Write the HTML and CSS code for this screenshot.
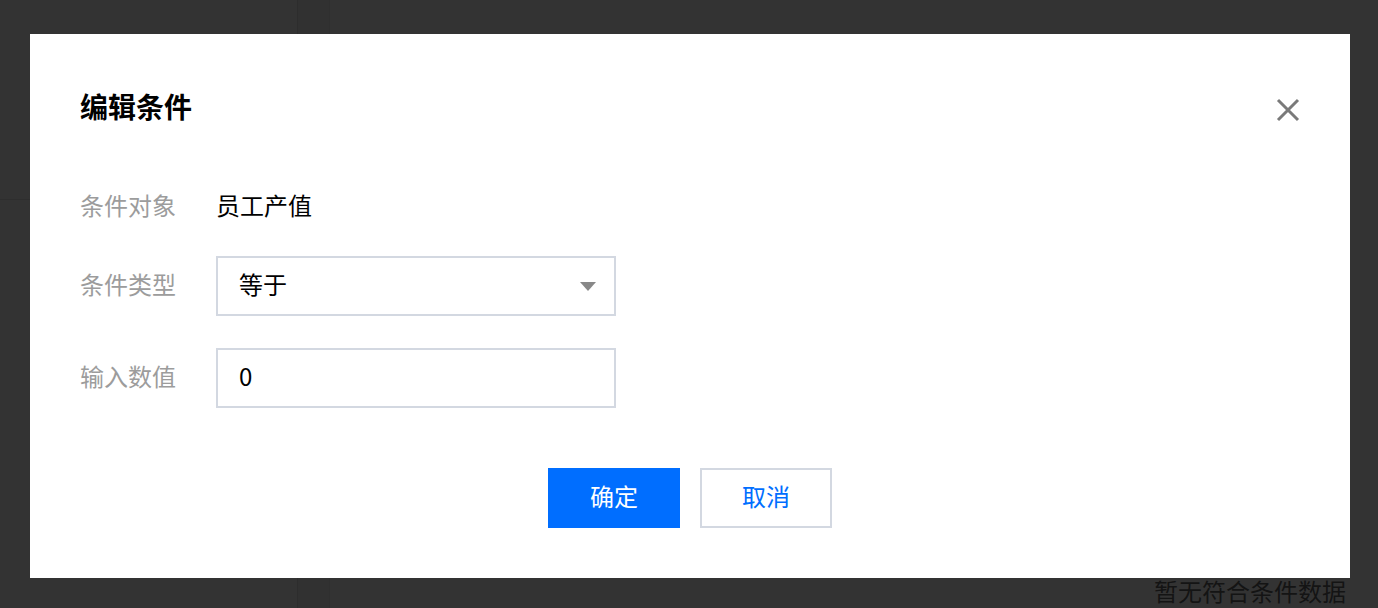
FILE: index.html
```html
<!DOCTYPE html>
<html lang="zh-CN">
<head>
<meta charset="utf-8">
<title>编辑条件</title>
<link rel="stylesheet" href="styles.css">
</head>
<body>
<div class="page">
  <aside class="sidebar">
    <div class="sidebar-top"></div>
    <div class="sidebar-rest"></div>
  </aside>
  <div class="strip"></div>
  <main class="main">
    <div class="empty">暂无符合条件数据</div>
  </main>
</div>

<div class="overlay">
  <div class="modal">
    <button class="close" aria-label="关闭">
      <svg width="24" height="24" viewBox="0 0 24 24"><path d="M2 2 L22 22 M22 2 L2 22" stroke="#7a7a7a" stroke-width="3" fill="none"/></svg>
    </button>
    <h2 class="title">编辑条件</h2>
    <div class="form">
      <div class="row row-static">
        <div class="label"><span class="txt">条件对象</span></div>
        <div class="value"><span class="txt">员工产值</span></div>
      </div>
      <div class="row">
        <div class="label"><span class="txt">条件类型</span></div>
        <div class="field select">
          <span class="txt">等于</span>
          <span class="arrow"></span>
        </div>
      </div>
      <div class="row">
        <div class="label"><span class="txt">输入数值</span></div>
        <div class="field"><span class="txt">0</span></div>
      </div>
    </div>
    <div class="actions">
      <button class="btn btn-primary"><span class="txt">确定</span></button>
      <button class="btn btn-default"><span class="txt">取消</span></button>
    </div>
  </div>
</div>
</body>
</html>
```

FILE: styles.css
```css
* { box-sizing: border-box; }
html, body {
  margin: 0;
  height: 608px;
  overflow: hidden;
  background: #333333;
  font-family: "Noto Sans CJK SC", "Noto Sans", sans-serif;
}
.page {
  display: flex;
  height: 608px;
}
.sidebar {
  width: 298px;
  border-right: 1px solid #2d2d2d;
  display: flex;
  flex-direction: column;
}
.sidebar-top {
  height: 200px;
  border-bottom: 1px solid #2e2e2e;
}
.sidebar-rest { flex: 1; }
.strip {
  width: 32px;
  background: #313131;
  border-right: 1px solid #2f2f2f;
}
.main {
  flex: 1;
  display: flex;
  align-items: flex-end;
  justify-content: flex-end;
  padding-right: 32px;
}
.empty {
  font-size: 24px;
  line-height: 34px;
  color: #141414;
}
.overlay {
  position: fixed;
  inset: 0;
  display: flex;
  justify-content: flex-start;
  align-items: flex-start;
  padding: 34px 0 0 30px;
}
.modal {
  position: relative;
  width: 1320px;
  height: 544px;
  background: #ffffff;
  padding: 52px 50px 50px;
}
.close {
  position: absolute;
  top: 64px;
  right: 50px;
  width: 24px;
  height: 24px;
  padding: 0;
  border: 0;
  background: none;
  display: block;
}
.close svg { display: block; }
.title {
  margin: 0 0 51px;
  font-size: 28px;
  line-height: 40px;
  font-weight: 700;
  color: #000000;
}
.form {
  display: flex;
  flex-direction: column;
  gap: 32px;
}
.row {
  display: flex;
  align-items: center;
  height: 60px;
}
.row-static { margin-bottom: -13px; }
.txt {
  display: block;
  line-height: 34px;
  margin-bottom: 4px;
}
.label {
  width: 136px;
  font-size: 24px;
  color: #9c9c9c;
}
.value {
  font-size: 24px;
  color: #000000;
}
.field {
  width: 400px;
  height: 60px;
  border: 2px solid #d3d8e1;
  display: flex;
  align-items: center;
  justify-content: space-between;
  padding: 0 18px 0 21px;
  font-size: 24px;
  color: #000000;
}
.arrow {
  width: 0;
  height: 0;
  border-left: 8px solid transparent;
  border-right: 8px solid transparent;
  border-top: 9px solid #888888;
}
.actions {
  display: flex;
  justify-content: center;
  gap: 20px;
  margin-top: 60px;
}
.btn {
  width: 132px;
  height: 60px;
  font-family: "Noto Sans CJK SC", "Noto Sans", sans-serif;
  font-size: 24px;
  padding: 0;
  cursor: pointer;
  display: flex;
  align-items: center;
  justify-content: center;
}
.btn-primary {
  background: #006eff;
  color: #ffffff;
  border: 0;
}
.btn-default {
  background: #ffffff;
  color: #006eff;
  border: 2px solid #d3d8e1;
}
```
